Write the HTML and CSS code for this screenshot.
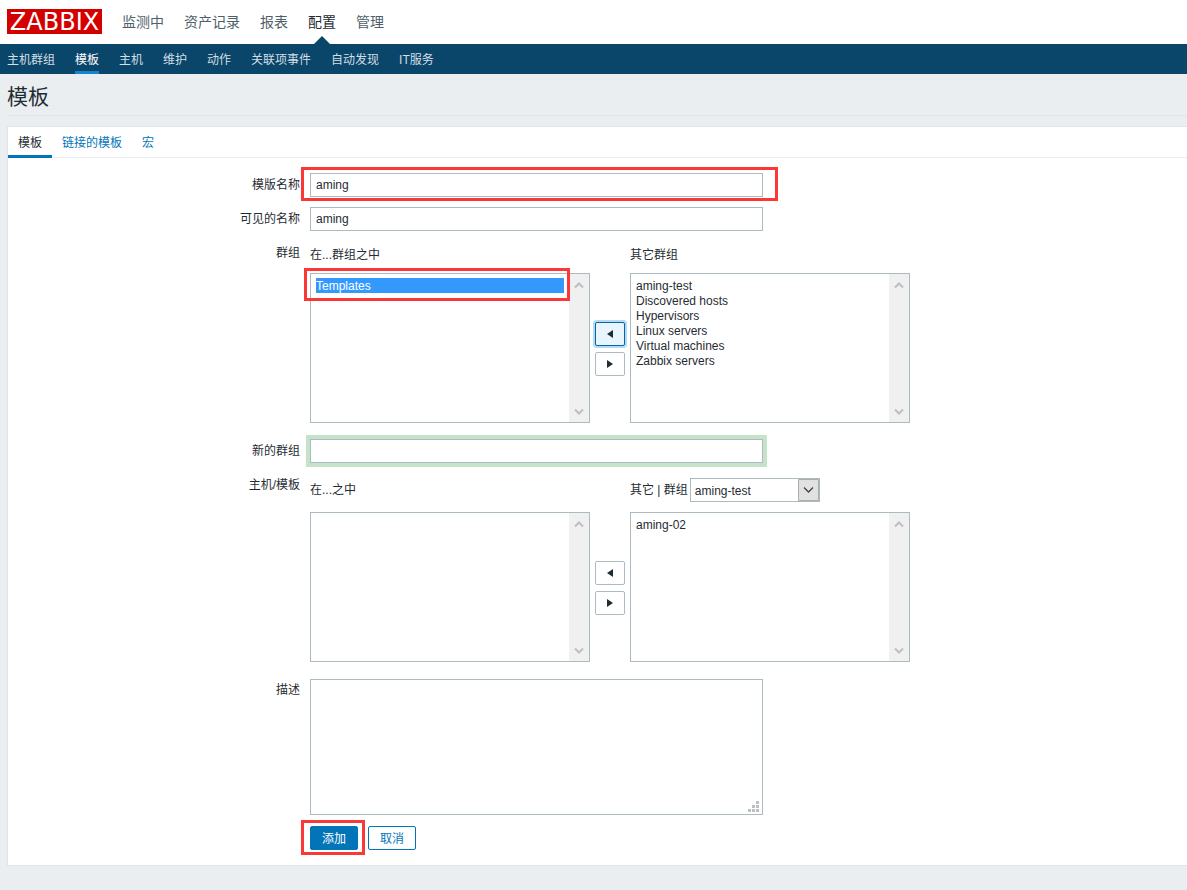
FILE: index.html
```html
<!DOCTYPE html>
<html lang="zh-CN">
<head>
<meta charset="utf-8">
<title>模板</title>
<link rel="stylesheet" href="styles.css">
</head>
<body>
<svg class="defs" aria-hidden="true">
  <symbol id="up" viewBox="0 0 10 8"><path d="M1 6.5 5 2.5 9 6.5" fill="none" stroke="#bfbfbf" stroke-width="2"/></symbol>
  <symbol id="down" viewBox="0 0 10 8"><path d="M1 1.5 5 5.5 9 1.5" fill="none" stroke="#bfbfbf" stroke-width="2"/></symbol>
  <symbol id="left" viewBox="0 0 6 8"><path d="M6 0V8L0 4Z" fill="#1f2c33"/></symbol>
  <symbol id="right" viewBox="0 0 6 8"><path d="M0 0V8L6 4Z" fill="#1f2c33"/></symbol>
</svg>
<header class="top">
  <a class="logo" href="#">ZABBIX</a>
  <nav class="main-nav">
    <a href="#">监测中</a>
    <a href="#">资产记录</a>
    <a href="#">报表</a>
    <a href="#" class="current">配置</a>
    <a href="#">管理</a>
  </nav>
</header>
<nav class="sub-nav">
  <a href="#">主机群组</a>
  <a href="#" class="current">模板</a>
  <a href="#">主机</a>
  <a href="#">维护</a>
  <a href="#">动作</a>
  <a href="#">关联项事件</a>
  <a href="#">自动发现</a>
  <a href="#">IT服务</a>
</nav>
<main class="page">
  <h1 class="title">模板</h1>
  <section class="panel">
    <nav class="tabs">
      <a href="#" class="current">模板</a>
      <a href="#">链接的模板</a>
      <a href="#">宏</a>
    </nav>
    <form class="form">
      <label class="label" for="name">模版名称</label>
      <div class="field marked mark-name">
        <input class="text" id="name" type="text" value="aming">
      </div>

      <label class="label" for="visible">可见的名称</label>
      <div class="field"><input class="text" id="visible" type="text" value="aming"></div>

      <span class="label">群组</span>
      <div class="double-list">
        <label class="list-head" for="in-groups">在...群组之中</label>
        <label class="list-head other" for="other-groups">其它群组</label>
        <div class="listbox marked mark-option">
          <select id="in-groups" multiple size="9"><option selected>Templates</option></select>
          <span class="scroll"><svg><use href="#up"/></svg><svg><use href="#down"/></svg></span>
        </div>
        <div class="movers">
          <button type="button" class="move focused" aria-label="添加到列表"><svg><use href="#left"/></svg></button>
          <button type="button" class="move" aria-label="从列表移除"><svg><use href="#right"/></svg></button>
        </div>
        <div class="listbox">
          <select id="other-groups" multiple size="9">
            <option>aming-test</option>
            <option>Discovered hosts</option>
            <option>Hypervisors</option>
            <option>Linux servers</option>
            <option>Virtual machines</option>
            <option>Zabbix servers</option>
          </select>
          <span class="scroll"><svg><use href="#up"/></svg><svg><use href="#down"/></svg></span>
        </div>
      </div>

      <label class="label" for="new-group">新的群组</label>
      <div class="field"><input class="text highlighted" id="new-group" type="text"></div>

      <span class="label">主机/模板</span>
      <div class="double-list">
        <label class="list-head tall" for="in-hosts">在...之中</label>
        <div class="list-head tall other">
          <label for="host-group">其它 | 群组</label>
          <span class="dropdown">
            <select id="host-group"><option>aming-test</option></select>
            <svg class="drop-arrow" viewBox="0 0 22 24"><path d="M.5 1.5H20.5V22.5H.5Z" fill="#e1e1e1" stroke="#adadad"/><path d="M6 9.5 10.5 14 15 9.5" fill="none" stroke="#444" stroke-width="1.3"/></svg>
          </span>
        </div>
        <div class="listbox">
          <select id="in-hosts" multiple size="9"></select>
          <span class="scroll"><svg><use href="#up"/></svg><svg><use href="#down"/></svg></span>
        </div>
        <div class="movers">
          <button type="button" class="move" aria-label="添加到列表"><svg><use href="#left"/></svg></button>
          <button type="button" class="move" aria-label="从列表移除"><svg><use href="#right"/></svg></button>
        </div>
        <div class="listbox">
          <select id="other-hosts" multiple size="9" aria-label="其它"><option>aming-02</option></select>
          <span class="scroll"><svg><use href="#up"/></svg><svg><use href="#down"/></svg></span>
        </div>
      </div>

      <label class="label" for="description">描述</label>
      <div class="field area">
        <textarea id="description"></textarea>
        <svg class="grip" viewBox="0 0 11 11"><path fill="#bfbfbf" d="M8 0h3v3H8zM4 4h3v3H4zM8 4h3v3H8zM0 8h3v3H0zM4 8h3v3H4zM8 8h3v3H8z"/></svg>
      </div>

      <div class="actions">
        <span class="marked mark-button"><button type="submit" class="btn primary">添加</button></span>
        <button type="button" class="btn">取消</button>
      </div>
    </form>
  </section>
</main>
</body>
</html>
```
FILE: styles.css
```css
*,
*::before,
*::after {
  box-sizing: border-box;
}

body {
  margin: 0;
  background: #ebeef0;
  color: #1f2c33;
  font: 12px/24px "Liberation Sans", "Noto Sans CJK SC", sans-serif;
}

a {
  text-decoration: none;
}

.defs {
  display: none;
}

.top {
  display: flex;
  align-items: flex-start;
  gap: 20px;
  height: 44px;
  padding: 0 7px;
  background: #fff;
}

.logo {
  width: 95px;
  height: 25px;
  margin-top: 9px;
  background: #d40000;
  color: #fff;
  font: 24px/27px "DejaVu Sans", sans-serif;
  text-align: center;
}

.main-nav {
  display: flex;
  gap: 20px;
  font-size: 14px;
  line-height: 44px;
}

.main-nav a {
  color: #4f5f69;
}

.main-nav .current {
  position: relative;
  color: #1f2c33;
}

.main-nav .current::after {
  content: "";
  position: absolute;
  left: 50%;
  bottom: 0;
  margin-left: -8px;
  border: 8px solid transparent;
  border-top: 0;
  border-bottom-color: #0a466a;
}

.sub-nav {
  display: flex;
  gap: 20px;
  height: 30px;
  padding: 0 7px;
  background: #0a466a;
  line-height: 30px;
}

.sub-nav a {
  padding-top: 1px;
  color: #d3dfe6;
}

.sub-nav .current {
  border-bottom: 3px solid #1385cf;
  color: #fff;
}

.page {
  padding-left: 7px;
}

.title {
  margin: 0 0 10px;
  padding: 7px 0 2px;
  border-bottom: 1px solid #dfe4e7;
  font-size: 21px;
  font-weight: 400;
  line-height: 32px;
}

.panel {
  border: 1px solid #dfe4e7;
  border-right: 0;
  background: #fff;
}

.tabs {
  display: flex;
  height: 31px;
  border-bottom: 1px solid #ebeef0;
  line-height: 30px;
}

.tabs a {
  height: 31px;
  padding: 1px 10px 0;
  color: #0275b8;
}

.tabs .current {
  border-bottom: 3px solid #0275b8;
  color: #1f2c33;
}

.form {
  display: grid;
  grid-template-columns: 292px minmax(0, 1fr);
  gap: 10px;
  padding: 15px 0;
}

.label {
  text-align: right;
}

.field {
  width: 100%;
  max-width: 453px;
}

.text,
.form textarea {
  display: block;
  width: 100%;
  height: 24px;
  margin: 0;
  padding: 0 5px;
  border: 1px solid #acbbc2;
  border-radius: 0;
  outline: 0;
  background: #fff;
  color: inherit;
  font: inherit;
}

.form textarea {
  height: 136px;
  resize: none;
}

.highlighted {
  box-shadow: 0 0 0 4px #c5e3c8;
}

.area {
  position: relative;
  padding-top: 1px;
}

.grip {
  position: absolute;
  right: 4px;
  bottom: 3px;
  width: 11px;
  height: 11px;
}

.double-list {
  display: grid;
  grid-template-columns: 280px 30px 280px;
  column-gap: 5px;
  padding-bottom: 6px;
}

.list-head {
  padding: 2px 0 6px;
}

.list-head.tall {
  padding: 5px 0 10px;
}

.other {
  display: flex;
  gap: 2px;
  grid-column: 3;
}

.listbox {
  display: flex;
  height: 150px;
  border: 1px solid #acbbc2;
}

.listbox select {
  flex: 1;
  min-width: 0;
  height: 100%;
  padding: 4px 5px;
  border: 0;
  border-radius: 0;
  outline: 0;
  overflow: hidden;
  background: #fff;
  color: inherit;
  font: inherit;
}

.listbox option {
  height: 15px;
  min-height: 15px;
  padding: 1px 0 0;
  line-height: 15px;
}

.listbox option:checked {
  background: #39f linear-gradient(#39f, #39f);
  color: #fff;
  -webkit-text-fill-color: #fff;
}

.scroll {
  display: flex;
  flex-direction: column;
  align-items: center;
  justify-content: space-between;
  width: 20px;
  padding: 7px 1px 6px 0;
  background: #f0f0f0;
}

.scroll svg {
  width: 10px;
  height: 8px;
}

.movers {
  display: flex;
  flex-direction: column;
  justify-content: center;
  gap: 6px;
  padding-top: 2px;
}

.move {
  display: flex;
  align-items: center;
  justify-content: center;
  height: 24px;
  padding: 0;
  border: 1px solid #acbbc2;
  border-radius: 2px;
  background: #fff;
}

.move svg {
  width: 6px;
  height: 8px;
}

.move.focused {
  border-color: #0268a4;
  background: #e8f5ff;
  box-shadow: 0 0 0 2px #b3d9f5;
}

.dropdown {
  position: relative;
  width: 130px;
}

.dropdown select {
  display: block;
  appearance: none;
  width: 100%;
  height: 24px;
  padding: 0 24px 2px 4px;
  border: 1px solid #acbbc2;
  border-radius: 0;
  background: #fff;
  color: inherit;
  font: inherit;
}

.drop-arrow {
  position: absolute;
  top: 0;
  right: 0;
  width: 22px;
  height: 24px;
  pointer-events: none;
}

.actions {
  display: flex;
  grid-column: 2;
  gap: 10px;
  padding-top: 1px;
}

.btn {
  display: block;
  width: 48px;
  height: 24px;
  padding: 1px 0 0;
  border: 1px solid #0275b8;
  border-radius: 2px;
  background: #fff;
  color: #0275b8;
  font: inherit;
  line-height: 22px;
}

.btn.primary {
  background: #0275b8;
  color: #fff;
}

/* Red callout frames laid over the steps to follow */
.marked {
  position: relative;
}

.marked::after {
  content: "";
  position: absolute;
  border: 3px solid #fb3838;
  pointer-events: none;
}

.mark-name::after {
  inset: -6px -15px -4px -9px;
}

.mark-option::after {
  top: -6px;
  right: 19px;
  left: -7px;
  height: 33px;
}

.mark-button::after {
  inset: -6px -7px -5px -9px;
}
```
